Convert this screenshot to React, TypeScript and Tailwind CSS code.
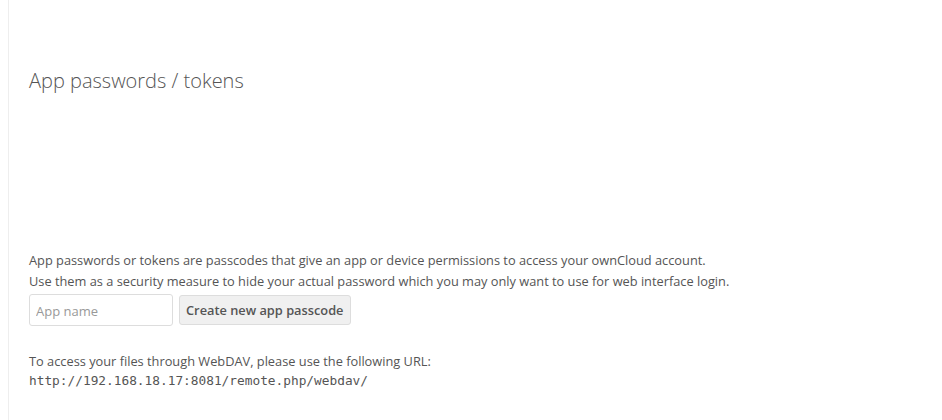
import React from 'react';

export default function App() {
  return (
    <div
      className="w-[942px] h-[420px] bg-white overflow-hidden text-[12.8px] text-[#555]"
      style={{ fontFamily: '"Open Sans", "Liberation Sans", sans-serif' }}
    >
      <div className="ml-[8px] h-full border-l border-[#eee] pl-[20px] pt-[66px]">
        <h2 className="text-[20px] font-light leading-[30px] text-[#555]">App passwords / tokens</h2>

        {/* empty token list */}
        <div className="h-[154px]" />

        <p className="leading-[21px]">
          App passwords or tokens are passcodes that give an app or device permissions to access your ownCloud account.
          <br />
          Use them as a security measure to hide your actual password which you may only want to use for web interface login.
        </p>

        <div className="mt-[2px] flex items-end gap-[6px]">
          <input
            type="text"
            placeholder="App name"
            className="h-[32px] w-[144px] rounded-[3px] border border-[#ddd] bg-white px-[6px] pt-[2px] text-[13px] text-[#555] outline-none placeholder:text-[#999]"
          />
          <button className="mb-[1px] h-[30px] rounded-[3px] border border-[#ddd] bg-[#f0f0f0] px-[6px] pt-[2px] text-[12.8px] font-semibold text-[#555]">
            Create new app passcode
          </button>
        </div>

        <p className="mt-[25px] leading-[21px]">To access your files through WebDAV, please use the following URL:</p>
        <code
          className="block text-[12.8px] leading-[18px] text-[#555]"
          style={{ fontFamily: '"DejaVu Sans Mono", monospace' }}
        >
          http://192.168.18.17:8081/remote.php/webdav/
        </code>
      </div>
    </div>
  );
}
